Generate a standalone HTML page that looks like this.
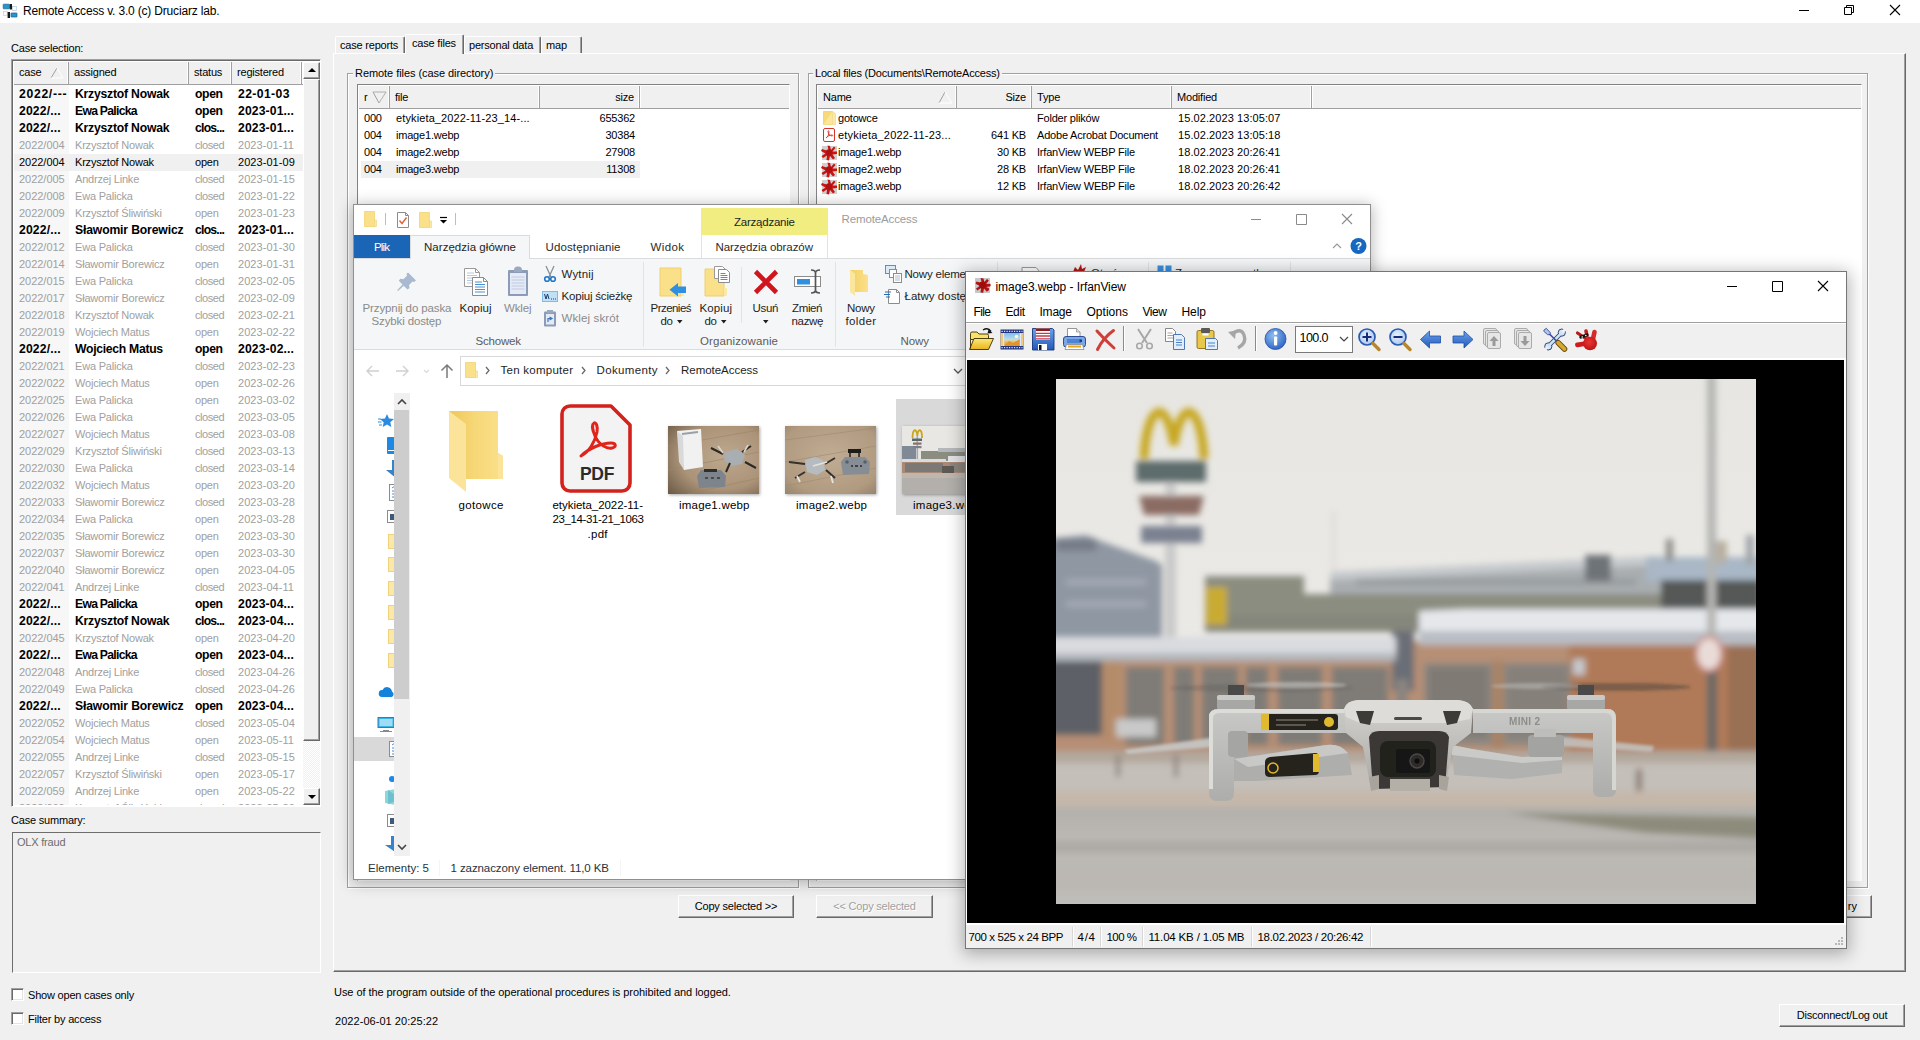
<!DOCTYPE html>
<html><head><meta charset="utf-8"><title>Remote Access</title>
<style>
*{box-sizing:border-box;margin:0;padding:0}
html,body{width:1920px;height:1040px;overflow:hidden;background:#f0f0f0}
body{font-family:"Liberation Sans",sans-serif;font-size:11px;color:#000;position:relative;letter-spacing:-0.2px}
.a{position:absolute}
.t{position:absolute;white-space:nowrap;line-height:1}
.sunk{position:absolute;border:1px solid;border-color:#828282 #fff #fff #828282;box-shadow:inset 1px 1px 0 #fff}
.btn{position:absolute;background:#f0f0f0;border:1px solid;border-color:#fff #696969 #696969 #fff;box-shadow:inset -1px -1px 0 #a0a0a0;text-align:center;font-size:11px;line-height:19px;white-space:nowrap}
.hd{position:absolute;top:0;height:22px !important;background:#f0f0f0;border-right:1px solid #a0a0a0;box-shadow:inset -1px 0 0 #fff, 1px 0 0 #fff;font-size:11px;line-height:21px;white-space:nowrap;overflow:hidden}
.cl{position:absolute;left:0;width:290px;height:17px;white-space:nowrap}
.cl span{position:absolute;top:0;line-height:17px;overflow:hidden;white-space:nowrap}
.cl.g{color:#a0a0a0}
.cl.b{font-weight:bold;font-size:12.2px;color:#000;letter-spacing:-0.15px}
.cl.s{background:#f0f0f0}
.gb{position:absolute;border:1px solid #a0a0a0;box-shadow:1px 1px 0 #fff, inset 1px 1px 0 #fff}
.gbl{position:absolute;background:#f0f0f0;padding:0 2px;line-height:13px;font-size:11px;white-space:nowrap}
.rw{position:absolute;white-space:nowrap;line-height:17px;height:17px;font-size:11px}
.sg{font-family:"Liberation Sans",sans-serif}
</style></head><body>

<div class="a" style="left:0;top:0;width:1920px;height:23px;background:#fff"></div>
<svg class="a" style="left:0px;top:0px" width="20" height="22" viewBox="0 0 20 22">
<rect x="3.200" y="4.200" width="6.300" height="4.600" rx=".6" fill="#2396d2" stroke="#1b5f88" stroke-width=".7"/>
<rect x="9.800" y="4" width="2.200" height="5.500" fill="#1a1a1a"/>
<rect x="12.400" y="6.300" width="4.200" height="4" fill="#fdfdfd" stroke="#a9c2d8" stroke-width=".6"/>
<rect x="3.300" y="11.600" width="3.900" height="4" fill="#fdfdfd" stroke="#d3c3b3" stroke-width=".6"/>
<rect x="7.600" y="12" width="2.400" height="6" fill="#1a1a1a"/>
<rect x="11" y="13" width="6" height="4" rx=".5" fill="#2396d2" stroke="#1b5f88" stroke-width=".7"/>
</svg>
<div class="t" style="left:23px;top:5px;font-size:12px;letter-spacing:-0.18px">Remote Access v. 3.0 (c) Druciarz lab.</div>
<svg class="a" style="left:1780px;top:0" width="140" height="23" viewBox="0 0 140 23">
<path d="M19 10.5h10" stroke="#000" stroke-width="1" fill="none"/>
<path d="M64.5 7.5h7v7h-7z M66.500 7.5v-2h7v7h-2" stroke="#000" stroke-width="1" fill="none"/>
<path d="M110 5l10 10M120 5l-10 10" stroke="#000" stroke-width="1.1" fill="none"/>
</svg>
<div class="t" style="left:11px;top:43px">Case selection:</div>
<div class="a" style="left:11px;top:59px;width:310px;height:748px;background:#fff;border:1px solid;border-color:#a0a0a0 #fff #fff #a0a0a0;box-shadow:inset 1px 1px 0 #696969"></div>
<div class="a" style="left:14px;top:62px;width:306px;height:743px;overflow:hidden;background:#fff">
<div class="a" style="left:0;top:23px;width:55px;height:730px;background:#f7f7f7"></div>
<div class="a" style="left:0;top:0;width:289px;height:23px;background:#f0f0f0;border-bottom:1px solid #a0a0a0"></div>
<div class="hd" style="left:0px;width:55px;padding-left:5px">case</div>
<div class="hd" style="left:55px;width:120px;padding-left:5px">assigned</div>
<div class="hd" style="left:175px;width:43px;padding-left:5px">status</div>
<div class="hd" style="left:218px;width:70px;padding-left:5px">registered</div>
<svg class="a" style="left:36px;top:5px" width="14" height="12"><path d="M1 11L7 1" stroke="#a0a0a0" fill="none"/><path d="M7 1L13 11H1" stroke="#fff" fill="none"/></svg>
<div class="cl b" style="top:24px"><span style="left:5px;width:50px;letter-spacing:0.683px;">2022/---</span><span style="left:61px;width:114px;letter-spacing:-0.216px;">Krzysztof Nowak</span><span style="left:181px;width:40px;letter-spacing:-0.380px;">open</span><span style="left:224px;width:64px;letter-spacing:0.380px;">22-01-03</span></div>
<div class="cl b" style="top:41px"><span style="left:5px;width:50px;letter-spacing:0.157px;">2022/...</span><span style="left:61px;width:114px;letter-spacing:-0.726px;">Ewa Palicka</span><span style="left:181px;width:40px;letter-spacing:-0.380px;">open</span><span style="left:224px;width:64px;letter-spacing:0.118px;">2023-01...</span></div>
<div class="cl b" style="top:58px"><span style="left:5px;width:50px;letter-spacing:0.157px;">2022/...</span><span style="left:61px;width:114px;letter-spacing:-0.216px;">Krzysztof Nowak</span><span style="left:181px;width:40px;letter-spacing:-0.763px;">clos...</span><span style="left:224px;width:64px;letter-spacing:0.118px;">2023-01...</span></div>
<div class="cl g" style="top:75px"><span style="left:5px;width:50px;letter-spacing:-0.03px;">2022/004</span><span style="left:61px;width:114px;">Krzysztof Nowak</span><span style="left:181px;width:40px;letter-spacing:-0.43px;">closed</span><span style="left:224px;width:64px;letter-spacing:0.06px;">2023-01-11</span></div>
<div class="cl s" style="top:92px"><span style="left:5px;width:50px;letter-spacing:-0.03px;">2022/004</span><span style="left:61px;width:114px;">Krzysztof Nowak</span><span style="left:181px;width:40px;">open</span><span style="left:224px;width:64px;letter-spacing:0.06px;">2023-01-09</span></div>
<div class="cl g" style="top:109px"><span style="left:5px;width:50px;letter-spacing:-0.03px;">2022/005</span><span style="left:61px;width:114px;">Andrzej Linke</span><span style="left:181px;width:40px;letter-spacing:-0.43px;">closed</span><span style="left:224px;width:64px;letter-spacing:0.06px;">2023-01-15</span></div>
<div class="cl g" style="top:126px"><span style="left:5px;width:50px;letter-spacing:-0.03px;">2022/008</span><span style="left:61px;width:114px;">Ewa Palicka</span><span style="left:181px;width:40px;letter-spacing:-0.43px;">closed</span><span style="left:224px;width:64px;letter-spacing:0.06px;">2023-01-22</span></div>
<div class="cl g" style="top:143px"><span style="left:5px;width:50px;letter-spacing:-0.03px;">2022/009</span><span style="left:61px;width:114px;">Krzysztof Śliwiński</span><span style="left:181px;width:40px;">open</span><span style="left:224px;width:64px;letter-spacing:0.06px;">2023-01-23</span></div>
<div class="cl b" style="top:160px"><span style="left:5px;width:50px;letter-spacing:0.157px;">2022/...</span><span style="left:61px;width:114px;letter-spacing:-0.155px;">Sławomir Borewicz</span><span style="left:181px;width:40px;letter-spacing:-0.763px;">clos...</span><span style="left:224px;width:64px;letter-spacing:0.118px;">2023-01...</span></div>
<div class="cl g" style="top:177px"><span style="left:5px;width:50px;letter-spacing:-0.03px;">2022/012</span><span style="left:61px;width:114px;">Ewa Palicka</span><span style="left:181px;width:40px;letter-spacing:-0.43px;">closed</span><span style="left:224px;width:64px;letter-spacing:0.06px;">2023-01-30</span></div>
<div class="cl g" style="top:194px"><span style="left:5px;width:50px;letter-spacing:-0.03px;">2022/014</span><span style="left:61px;width:114px;">Sławomir Borewicz</span><span style="left:181px;width:40px;">open</span><span style="left:224px;width:64px;letter-spacing:0.06px;">2023-01-31</span></div>
<div class="cl g" style="top:211px"><span style="left:5px;width:50px;letter-spacing:-0.03px;">2022/015</span><span style="left:61px;width:114px;">Ewa Palicka</span><span style="left:181px;width:40px;letter-spacing:-0.43px;">closed</span><span style="left:224px;width:64px;letter-spacing:0.06px;">2023-02-05</span></div>
<div class="cl g" style="top:228px"><span style="left:5px;width:50px;letter-spacing:-0.03px;">2022/017</span><span style="left:61px;width:114px;">Sławomir Borewicz</span><span style="left:181px;width:40px;letter-spacing:-0.43px;">closed</span><span style="left:224px;width:64px;letter-spacing:0.06px;">2023-02-09</span></div>
<div class="cl g" style="top:245px"><span style="left:5px;width:50px;letter-spacing:-0.03px;">2022/018</span><span style="left:61px;width:114px;">Krzysztof Nowak</span><span style="left:181px;width:40px;letter-spacing:-0.43px;">closed</span><span style="left:224px;width:64px;letter-spacing:0.06px;">2023-02-21</span></div>
<div class="cl g" style="top:262px"><span style="left:5px;width:50px;letter-spacing:-0.03px;">2022/019</span><span style="left:61px;width:114px;">Wojciech Matus</span><span style="left:181px;width:40px;">open</span><span style="left:224px;width:64px;letter-spacing:0.06px;">2023-02-22</span></div>
<div class="cl b" style="top:279px"><span style="left:5px;width:50px;letter-spacing:0.157px;">2022/...</span><span style="left:61px;width:114px;letter-spacing:-0.290px;">Wojciech Matus</span><span style="left:181px;width:40px;letter-spacing:-0.380px;">open</span><span style="left:224px;width:64px;letter-spacing:0.118px;">2023-02...</span></div>
<div class="cl g" style="top:296px"><span style="left:5px;width:50px;letter-spacing:-0.03px;">2022/021</span><span style="left:61px;width:114px;">Ewa Palicka</span><span style="left:181px;width:40px;letter-spacing:-0.43px;">closed</span><span style="left:224px;width:64px;letter-spacing:0.06px;">2023-02-23</span></div>
<div class="cl g" style="top:313px"><span style="left:5px;width:50px;letter-spacing:-0.03px;">2022/022</span><span style="left:61px;width:114px;">Wojciech Matus</span><span style="left:181px;width:40px;">open</span><span style="left:224px;width:64px;letter-spacing:0.06px;">2023-02-26</span></div>
<div class="cl g" style="top:330px"><span style="left:5px;width:50px;letter-spacing:-0.03px;">2022/025</span><span style="left:61px;width:114px;">Ewa Palicka</span><span style="left:181px;width:40px;">open</span><span style="left:224px;width:64px;letter-spacing:0.06px;">2023-03-02</span></div>
<div class="cl g" style="top:347px"><span style="left:5px;width:50px;letter-spacing:-0.03px;">2022/026</span><span style="left:61px;width:114px;">Ewa Palicka</span><span style="left:181px;width:40px;letter-spacing:-0.43px;">closed</span><span style="left:224px;width:64px;letter-spacing:0.06px;">2023-03-05</span></div>
<div class="cl g" style="top:364px"><span style="left:5px;width:50px;letter-spacing:-0.03px;">2022/027</span><span style="left:61px;width:114px;">Wojciech Matus</span><span style="left:181px;width:40px;letter-spacing:-0.43px;">closed</span><span style="left:224px;width:64px;letter-spacing:0.06px;">2023-03-08</span></div>
<div class="cl g" style="top:381px"><span style="left:5px;width:50px;letter-spacing:-0.03px;">2022/029</span><span style="left:61px;width:114px;">Krzysztof Śliwiński</span><span style="left:181px;width:40px;letter-spacing:-0.43px;">closed</span><span style="left:224px;width:64px;letter-spacing:0.06px;">2023-03-13</span></div>
<div class="cl g" style="top:398px"><span style="left:5px;width:50px;letter-spacing:-0.03px;">2022/030</span><span style="left:61px;width:114px;">Ewa Palicka</span><span style="left:181px;width:40px;letter-spacing:-0.43px;">closed</span><span style="left:224px;width:64px;letter-spacing:0.06px;">2023-03-14</span></div>
<div class="cl g" style="top:415px"><span style="left:5px;width:50px;letter-spacing:-0.03px;">2022/032</span><span style="left:61px;width:114px;">Wojciech Matus</span><span style="left:181px;width:40px;">open</span><span style="left:224px;width:64px;letter-spacing:0.06px;">2023-03-20</span></div>
<div class="cl g" style="top:432px"><span style="left:5px;width:50px;letter-spacing:-0.03px;">2022/033</span><span style="left:61px;width:114px;">Sławomir Borewicz</span><span style="left:181px;width:40px;letter-spacing:-0.43px;">closed</span><span style="left:224px;width:64px;letter-spacing:0.06px;">2023-03-28</span></div>
<div class="cl g" style="top:449px"><span style="left:5px;width:50px;letter-spacing:-0.03px;">2022/034</span><span style="left:61px;width:114px;">Ewa Palicka</span><span style="left:181px;width:40px;">open</span><span style="left:224px;width:64px;letter-spacing:0.06px;">2023-03-28</span></div>
<div class="cl g" style="top:466px"><span style="left:5px;width:50px;letter-spacing:-0.03px;">2022/035</span><span style="left:61px;width:114px;">Sławomir Borewicz</span><span style="left:181px;width:40px;">open</span><span style="left:224px;width:64px;letter-spacing:0.06px;">2023-03-30</span></div>
<div class="cl g" style="top:483px"><span style="left:5px;width:50px;letter-spacing:-0.03px;">2022/037</span><span style="left:61px;width:114px;">Sławomir Borewicz</span><span style="left:181px;width:40px;">open</span><span style="left:224px;width:64px;letter-spacing:0.06px;">2023-03-30</span></div>
<div class="cl g" style="top:500px"><span style="left:5px;width:50px;letter-spacing:-0.03px;">2022/040</span><span style="left:61px;width:114px;">Sławomir Borewicz</span><span style="left:181px;width:40px;">open</span><span style="left:224px;width:64px;letter-spacing:0.06px;">2023-04-05</span></div>
<div class="cl g" style="top:517px"><span style="left:5px;width:50px;letter-spacing:-0.03px;">2022/041</span><span style="left:61px;width:114px;">Andrzej Linke</span><span style="left:181px;width:40px;letter-spacing:-0.43px;">closed</span><span style="left:224px;width:64px;letter-spacing:0.06px;">2023-04-11</span></div>
<div class="cl b" style="top:534px"><span style="left:5px;width:50px;letter-spacing:0.157px;">2022/...</span><span style="left:61px;width:114px;letter-spacing:-0.726px;">Ewa Palicka</span><span style="left:181px;width:40px;letter-spacing:-0.380px;">open</span><span style="left:224px;width:64px;letter-spacing:0.118px;">2023-04...</span></div>
<div class="cl b" style="top:551px"><span style="left:5px;width:50px;letter-spacing:0.157px;">2022/...</span><span style="left:61px;width:114px;letter-spacing:-0.216px;">Krzysztof Nowak</span><span style="left:181px;width:40px;letter-spacing:-0.763px;">clos...</span><span style="left:224px;width:64px;letter-spacing:0.118px;">2023-04...</span></div>
<div class="cl g" style="top:568px"><span style="left:5px;width:50px;letter-spacing:-0.03px;">2022/045</span><span style="left:61px;width:114px;">Krzysztof Nowak</span><span style="left:181px;width:40px;">open</span><span style="left:224px;width:64px;letter-spacing:0.06px;">2023-04-20</span></div>
<div class="cl b" style="top:585px"><span style="left:5px;width:50px;letter-spacing:0.157px;">2022/...</span><span style="left:61px;width:114px;letter-spacing:-0.726px;">Ewa Palicka</span><span style="left:181px;width:40px;letter-spacing:-0.380px;">open</span><span style="left:224px;width:64px;letter-spacing:0.118px;">2023-04...</span></div>
<div class="cl g" style="top:602px"><span style="left:5px;width:50px;letter-spacing:-0.03px;">2022/048</span><span style="left:61px;width:114px;">Andrzej Linke</span><span style="left:181px;width:40px;letter-spacing:-0.43px;">closed</span><span style="left:224px;width:64px;letter-spacing:0.06px;">2023-04-26</span></div>
<div class="cl g" style="top:619px"><span style="left:5px;width:50px;letter-spacing:-0.03px;">2022/049</span><span style="left:61px;width:114px;">Ewa Palicka</span><span style="left:181px;width:40px;letter-spacing:-0.43px;">closed</span><span style="left:224px;width:64px;letter-spacing:0.06px;">2023-04-26</span></div>
<div class="cl b" style="top:636px"><span style="left:5px;width:50px;letter-spacing:0.157px;">2022/...</span><span style="left:61px;width:114px;letter-spacing:-0.155px;">Sławomir Borewicz</span><span style="left:181px;width:40px;letter-spacing:-0.380px;">open</span><span style="left:224px;width:64px;letter-spacing:0.118px;">2023-04...</span></div>
<div class="cl g" style="top:653px"><span style="left:5px;width:50px;letter-spacing:-0.03px;">2022/052</span><span style="left:61px;width:114px;">Wojciech Matus</span><span style="left:181px;width:40px;letter-spacing:-0.43px;">closed</span><span style="left:224px;width:64px;letter-spacing:0.06px;">2023-05-04</span></div>
<div class="cl g" style="top:670px"><span style="left:5px;width:50px;letter-spacing:-0.03px;">2022/054</span><span style="left:61px;width:114px;">Wojciech Matus</span><span style="left:181px;width:40px;">open</span><span style="left:224px;width:64px;letter-spacing:0.06px;">2023-05-11</span></div>
<div class="cl g" style="top:687px"><span style="left:5px;width:50px;letter-spacing:-0.03px;">2022/055</span><span style="left:61px;width:114px;">Andrzej Linke</span><span style="left:181px;width:40px;letter-spacing:-0.43px;">closed</span><span style="left:224px;width:64px;letter-spacing:0.06px;">2023-05-15</span></div>
<div class="cl g" style="top:704px"><span style="left:5px;width:50px;letter-spacing:-0.03px;">2022/057</span><span style="left:61px;width:114px;">Krzysztof Śliwiński</span><span style="left:181px;width:40px;">open</span><span style="left:224px;width:64px;letter-spacing:0.06px;">2023-05-17</span></div>
<div class="cl g" style="top:721px"><span style="left:5px;width:50px;letter-spacing:-0.03px;">2022/059</span><span style="left:61px;width:114px;">Andrzej Linke</span><span style="left:181px;width:40px;">open</span><span style="left:224px;width:64px;letter-spacing:0.06px;">2023-05-22</span></div>
<div class="cl g" style="top:738px"><span style="left:5px;width:50px;letter-spacing:-0.03px;">2022/060</span><span style="left:61px;width:114px;">Krzysztof Śliwiński</span><span style="left:181px;width:40px;letter-spacing:-0.43px;">closed</span><span style="left:224px;width:64px;letter-spacing:0.06px;">2023-05-29</span></div>
<div class="a" style="left:289px;top:0;width:17px;height:743px;background:#f0f0f0;background-image:repeating-conic-gradient(#fff 0 25%,#f0f0f0 0 50%);background-size:2px 2px"></div>
<div class="btn" style="left:289px;top:0;width:17px;height:17px"></div>
<svg class="a" style="left:294px;top:6px" width="8" height="4"><path d="M0 4L4 0L8 4z" fill="#000"/></svg>
<div class="btn" style="left:289px;top:17px;width:17px;height:662px"></div>
<div class="btn" style="left:289px;top:726px;width:17px;height:17px"></div>
<svg class="a" style="left:294px;top:733px" width="8" height="4"><path d="M0 0L4 4L8 0z" fill="#000"/></svg>
</div>
<div class="t" style="left:11px;top:815px">Case summary:</div>
<div class="a" style="left:12px;top:832px;width:309px;height:141px;background:#f0f0f0;border:1px solid;border-color:#6e6e6e #fff #fff #6e6e6e"></div>
<div class="t" style="left:17px;top:837px;color:#6d6d6d">OLX fraud</div>
<div class="a" style="left:11px;top:988px;width:13px;height:13px;background:#fff;border:1px solid;border-color:#a0a0a0 #fff #fff #a0a0a0;box-shadow:inset 1px 1px 0 #696969, inset -1px -1px 0 #e3e3e3"></div>
<div class="t" style="left:28px;top:990px">Show open cases only</div>
<div class="a" style="left:11px;top:1012px;width:13px;height:13px;background:#fff;border:1px solid;border-color:#a0a0a0 #fff #fff #a0a0a0;box-shadow:inset 1px 1px 0 #696969, inset -1px -1px 0 #e3e3e3"></div>
<div class="t" style="left:28px;top:1014px">Filter by access</div>
<div class="a" style="left:333px;top:53px;width:1573px;height:919px;border:1px solid;border-color:#fff #696969 #696969 #fff;box-shadow:inset -1px -1px 0 #a0a0a0"></div>
<div class="a" style="left:335px;top:36px;width:70px;height:17px;border:1px solid;border-color:#fff #696969 transparent #fff;box-shadow:inset -1px 0 0 #a0a0a0;border-bottom:none;border-radius:2px 2px 0 0"></div>
<div class="t" style="left:340px;top:40px">case reports</div>
<div class="a" style="left:464px;top:36px;width:77px;height:17px;border:1px solid;border-color:#fff #696969 transparent #fff;box-shadow:inset -1px 0 0 #a0a0a0;border-bottom:none;border-radius:2px 2px 0 0"></div>
<div class="t" style="left:469px;top:40px">personal data</div>
<div class="a" style="left:541px;top:36px;width:41px;height:17px;border:1px solid;border-color:#fff #696969 transparent #fff;box-shadow:inset -1px 0 0 #a0a0a0;border-bottom:none;border-radius:2px 2px 0 0"></div>
<div class="t" style="left:546px;top:40px">map</div>
<div class="a" style="left:405px;top:34px;width:59px;height:20px;background:#f0f0f0;border:1px solid;border-color:#fff #696969 transparent #fff;box-shadow:inset -1px 0 0 #a0a0a0;border-bottom:none;border-radius:2px 2px 0 0"></div>
<div class="t" style="left:412px;top:38px">case files</div>
<div class="gb" style="left:347px;top:73px;width:452px;height:815px"></div>
<div class="gbl" style="left:353px;top:67px;letter-spacing:-0.06px">Remote files (case directory)</div>
<div class="gb" style="left:808px;top:73px;width:1060px;height:815px"></div>
<div class="gbl" style="left:813px;top:67px">Local files (Documents\RemoteAccess)</div>
<div class="sunk" style="left:357px;top:84px;width:433px;height:797px;background:#fff"></div>
<div class="a" style="left:359px;top:86px;width:430px;height:790px;overflow:hidden">
<div class="a" style="left:0;top:0;width:430px;height:23px;background:#f0f0f0;border-bottom:1px solid #a0a0a0"></div><div class="hd" style="left:0px;width:31px;height:23px;line-height:23px;padding-left:5px">r</div><div class="hd" style="left:31px;width:150px;height:23px;line-height:23px;padding-left:5px">file</div><div class="hd" style="left:181px;width:100px;height:23px;line-height:23px;text-align:right;padding-right:5px">size</div>
<svg class="a" style="left:13px;top:5px" width="16" height="13"><path d="M1 1L7 12" stroke="#a0a0a0" fill="none"/><path d="M7 12L14 1H1" stroke="#a0a0a0" fill="none" stroke-width=".8"/></svg>
<div class="a" style="left:2px;top:75px;width:279px;height:17px;background:#f0f0f0"></div>
<div class="rw" style="left:5px;top:24px">000</div><div class="rw" style="left:37px;top:24px;letter-spacing:0.12px">etykieta_2022-11-23_14-...</div><div class="rw" style="left:181px;width:95px;text-align:right;top:24px">655362</div>
<div class="rw" style="left:5px;top:41px">004</div><div class="rw" style="left:37px;top:41px;letter-spacing:-0.2px">image1.webp</div><div class="rw" style="left:181px;width:95px;text-align:right;top:41px">30384</div>
<div class="rw" style="left:5px;top:58px">004</div><div class="rw" style="left:37px;top:58px;letter-spacing:-0.2px">image2.webp</div><div class="rw" style="left:181px;width:95px;text-align:right;top:58px">27908</div>
<div class="rw" style="left:5px;top:75px">004</div><div class="rw" style="left:37px;top:75px;letter-spacing:-0.2px">image3.webp</div><div class="rw" style="left:181px;width:95px;text-align:right;top:75px">11308</div>
</div>
<div class="sunk" style="left:816px;top:84px;width:1046px;height:797px;background:#fff"></div>
<div class="a" style="left:818px;top:86px;width:1043px;height:790px;overflow:hidden">
<div class="a" style="left:0;top:0;width:1043px;height:23px;background:#f0f0f0;border-bottom:1px solid #a0a0a0"></div><div class="hd" style="left:0px;width:139px;height:23px;line-height:23px;padding-left:5px">Name</div><div class="hd" style="left:139px;width:75px;height:23px;line-height:23px;text-align:right;padding-right:5px">Size</div><div class="hd" style="left:214px;width:140px;height:23px;line-height:23px;padding-left:5px">Type</div><div class="hd" style="left:354px;width:140px;height:23px;line-height:23px;padding-left:5px">Modified</div>
<svg class="a" style="left:120px;top:5px" width="16" height="13"><path d="M1 12L7 1" stroke="#a0a0a0" fill="none"/><path d="M7 1L14 12H1" stroke="#fff" fill="none"/></svg>
<svg class="a" style="left:4px;top:24px" width="16" height="16"><path d="M1.500 1.5h9v13h-9z" fill="#f7d978" stroke="#e9c558" stroke-width=".6"/><path d="M1.500 14.500h12v-11l-3-2z" fill="#fbe79c"/><path d="M10.500 1.5l3 2v11h-3z" fill="#fbe9a8" stroke="#edd48a" stroke-width=".5"/></svg>
<div class="rw" style="left:20px;top:24px;letter-spacing:-0.2px">gotowce</div><div class="rw" style="left:139px;width:69px;text-align:right;top:24px"></div><div class="rw" style="left:219px;top:24px">Folder plików</div><div class="rw" style="left:360px;top:24px;letter-spacing:0.08px">15.02.2023 13:05:07</div>
<svg class="a" style="left:4px;top:41px" width="16" height="16"><rect x="1.5" y="1.5" width="11" height="13" rx="1.5" fill="#fff" stroke="#d4352b" stroke-width="1"/><path d="M4 11c2-1 3-4 3-6.500c0-1-1-1-1 0c0 2 2 4.500 4 4.500c1 0 1-1 0-1c-2 0-4.500 1-6 3z" fill="none" stroke="#d4352b" stroke-width=".9"/></svg>
<div class="rw" style="left:20px;top:41px;letter-spacing:0.2px">etykieta_2022-11-23...</div><div class="rw" style="left:139px;width:69px;text-align:right;top:41px">641 KB</div><div class="rw" style="left:219px;top:41px">Adobe Acrobat Document</div><div class="rw" style="left:360px;top:41px;letter-spacing:0.08px">15.02.2023 13:05:18</div>
<svg class="a" style="left:2px;top:58px" width="18" height="17" viewBox="0 0 18 17"><rect x="2" y="2" width="15" height="14" fill="#a9a9a9" opacity=".55"/><path d="M9 8.500L7.500 1.5 10 2l1 4 3-3.500 1.500 1.500-3 3.500 4.500 0 0 2.500-4.500 0.500 2.500 3.500-2 1.500-3-3.500-1 4.500-2.500-0.500 0.500-4.500-4 2.500-1.500-2 4-2.500-4.500-2.500 1-2 4.500 1.500z" fill="#c81414"/><circle cx="9" cy="8.500" r="3.200" fill="#b01010"/></svg>
<div class="rw" style="left:20px;top:58px;letter-spacing:-0.2px">image1.webp</div><div class="rw" style="left:139px;width:69px;text-align:right;top:58px">30 KB</div><div class="rw" style="left:219px;top:58px">IrfanView WEBP File</div><div class="rw" style="left:360px;top:58px;letter-spacing:0.08px">18.02.2023 20:26:41</div>
<svg class="a" style="left:2px;top:75px" width="18" height="17" viewBox="0 0 18 17"><rect x="2" y="2" width="15" height="14" fill="#a9a9a9" opacity=".55"/><path d="M9 8.500L7.500 1.5 10 2l1 4 3-3.500 1.500 1.500-3 3.500 4.500 0 0 2.500-4.500 0.500 2.500 3.500-2 1.500-3-3.500-1 4.500-2.500-0.500 0.500-4.500-4 2.500-1.500-2 4-2.500-4.500-2.500 1-2 4.500 1.500z" fill="#c81414"/><circle cx="9" cy="8.500" r="3.200" fill="#b01010"/></svg>
<div class="rw" style="left:20px;top:75px;letter-spacing:-0.2px">image2.webp</div><div class="rw" style="left:139px;width:69px;text-align:right;top:75px">28 KB</div><div class="rw" style="left:219px;top:75px">IrfanView WEBP File</div><div class="rw" style="left:360px;top:75px;letter-spacing:0.08px">18.02.2023 20:26:41</div>
<svg class="a" style="left:2px;top:92px" width="18" height="17" viewBox="0 0 18 17"><rect x="2" y="2" width="15" height="14" fill="#a9a9a9" opacity=".55"/><path d="M9 8.500L7.500 1.5 10 2l1 4 3-3.500 1.500 1.500-3 3.500 4.500 0 0 2.500-4.500 0.500 2.500 3.500-2 1.500-3-3.500-1 4.500-2.500-0.500 0.500-4.500-4 2.500-1.500-2 4-2.500-4.500-2.500 1-2 4.500 1.500z" fill="#c81414"/><circle cx="9" cy="8.500" r="3.200" fill="#b01010"/></svg>
<div class="rw" style="left:20px;top:92px;letter-spacing:-0.2px">image3.webp</div><div class="rw" style="left:139px;width:69px;text-align:right;top:92px">12 KB</div><div class="rw" style="left:219px;top:92px">IrfanView WEBP File</div><div class="rw" style="left:360px;top:92px;letter-spacing:0.08px">18.02.2023 20:26:42</div>
</div>
<div class="btn" style="left:678px;top:895px;width:116px;height:23px;line-height:20px">Copy selected &gt;&gt;</div>
<div class="btn" style="left:816px;top:895px;width:117px;height:23px;line-height:20px;color:#a0a0a0;text-shadow:1px 1px 0 #fff">&lt;&lt; Copy selected</div>
<div class="btn" style="left:1760px;top:895px;width:112px;height:23px;line-height:20px;text-align:right;padding-right:14px;letter-spacing:0">ry</div>
<div class="btn" style="left:1779px;top:1004px;width:126px;height:23px;line-height:20px">Disconnect/Log out</div>
<div class="t" style="left:334px;top:987px;letter-spacing:-0.06px">Use of the program outside of the operational procedures is prohibited and logged.</div>
<div class="t" style="left:335px;top:1016px;letter-spacing:0.05px">2022-06-01 20:25:22</div>
<div class="a" style="left:354px;top:205px;width:1016px;height:674px;background:#fff;box-shadow:0 0 0 1px #8f8f8f, 0 2px 14px 2px rgba(0,0,0,.28)"></div>
<div class="a" id="exp" style="left:354px;top:205px;width:1016px;height:674px;overflow:hidden;letter-spacing:0">
<svg class="a" style="left:10px;top:6px" width="13" height="16" viewBox="0 0 13 16" preserveAspectRatio="none"><path d="M0.500 0.500h10v15h-10z" fill="#fbe08a" stroke="#efcf6a" stroke-width=".7"/><path d="M10.500 9h2v6.500h-2z" fill="#fbe9a8" stroke="#efd37a" stroke-width=".6"/></svg>
<div class="a" style="left:31px;top:8px;width:1px;height:12px;background:#bdbdbd"></div>
<svg class="a" style="left:42px;top:6px" width="14" height="18"><path d="M1.500 1.500h8l3 3v12h-11z" fill="#fff" stroke="#8c8c8c"/><path d="M9.500 1.500v3h3" fill="none" stroke="#8c8c8c"/><path d="M3.500 9.500l2.500 3 4.500-6" fill="none" stroke="#e0633a" stroke-width="1.400"/></svg>
<svg class="a" style="left:65px;top:7px" width="13" height="16" viewBox="0 0 13 16" preserveAspectRatio="none"><path d="M0.500 0.500h10v15h-10z" fill="#fbe08a" stroke="#efcf6a" stroke-width=".7"/><path d="M10.500 9h2v6.500h-2z" fill="#fbe9a8" stroke="#efd37a" stroke-width=".6"/></svg>
<svg class="a" style="left:86px;top:11px" width="8" height="8"><path d="M0 1.500h7" stroke="#000" stroke-width="1.200"/><path d="M0 4h7L3.500 7.500z" fill="#000"/></svg>
<div class="a" style="left:101px;top:8px;width:1px;height:12px;background:#bdbdbd"></div>
<div class="a" style="left:347px;top:3px;width:127px;height:27px;background:#f1ed80"></div>
<div class="t" style="left:380.0px;top:9.5px;height:15px;line-height:15px;font-size:11.5px;letter-spacing:-0.228px;color:#1e1e1e;">Zarządzanie</div>
<div class="t" style="left:487.5px;top:7.0px;height:15px;line-height:15px;font-size:11.5px;letter-spacing:-0.121px;color:#9b9b9b;">RemoteAccess</div>
<svg class="a" style="left:886px;top:2px" width="125" height="24"><path d="M11 12.500h10" stroke="#8a8a8a"/><path d="M56.500 7.500h10v10h-10z" fill="none" stroke="#8a8a8a"/><path d="M102 7l10 10M112 7l-10 10" stroke="#8a8a8a" stroke-width="1.100"/></svg>
<div class="a" style="left:0;top:30px;width:56px;height:23px;background:#1a65b5"></div>
<div class="t" style="left:20.0px;top:34.5px;height:15px;line-height:15px;font-size:11.5px;letter-spacing:-0.843px;color:#fff;">Plik</div>
<div class="a" style="left:0;top:53px;width:1016px;height:92px;background:#f5f6f7;border-top:1px solid #dadbdc;border-bottom:1px solid #dadbdc"></div>
<div class="a" style="left:56px;top:30px;width:120px;height:24px;background:#f5f6f7;border:1px solid #dadbdc;border-bottom:none"></div>
<div class="t" style="left:70.0px;top:34.5px;height:15px;line-height:15px;font-size:11.5px;letter-spacing:0.039px;color:#1e1e1e;">Narzędzia główne</div>
<div class="t" style="left:191.5px;top:34.5px;height:15px;line-height:15px;font-size:11.5px;letter-spacing:0.123px;color:#2b2b2b;">Udostępnianie</div>
<div class="t" style="left:296.5px;top:34.5px;height:15px;line-height:15px;font-size:11.5px;letter-spacing:0.387px;color:#2b2b2b;">Widok</div>
<div class="a" style="left:347px;top:30px;width:127px;height:23px;border-left:1px solid #e2e3e4;border-right:1px solid #e2e3e4"></div>
<div class="t" style="left:361.5px;top:34.5px;height:15px;line-height:15px;font-size:11.5px;letter-spacing:-0.058px;color:#2b2b2b;">Narzędzia obrazów</div>
<svg class="a" style="left:977px;top:32px" width="36" height="18"><path d="M2 11l4-4 4 4" fill="none" stroke="#9a9a9a" stroke-width="1.200"/><circle cx="27.500" cy="9" r="8" fill="#1567c0"/><text x="27.500" y="13" text-anchor="middle" font-family="Liberation Sans" font-weight="bold" font-size="11" fill="#fff">?</text></svg>
<svg class="a" style="left:42px;top:66px" width="22" height="22" viewBox="0 0 22 22"><path d="M12 1.500l8 8-2 1.500-1.500-.5-3.500 3.500 .5 3-2 1.500-3.800-3.800L2 20l-.8-.8L6.500 13.500 2.800 9.800l1.500-2 3 .5L11 4.800 10.500 3z" fill="#a9b9d1"/></svg>
<div class="t" style="left:8.5px;top:96.0px;height:15px;line-height:15px;font-size:11.5px;letter-spacing:-0.111px;color:#8b8b8b;">Przypnij do paska</div>
<div class="t" style="left:17.5px;top:109.0px;height:15px;line-height:15px;font-size:11.5px;letter-spacing:-0.133px;color:#8b8b8b;">Szybki dostęp</div>
<svg class="a" style="left:109px;top:62px" width="26" height="30" viewBox="0 0 26 30"><path d="M1.500 1.500h11l4 4v14h-15z" fill="#fff" stroke="#9a9a9a"/><path d="M12.500 1.500v4h4" fill="none" stroke="#9a9a9a"/><path d="M4 6h7M4 8.500h10M4 11h10M4 13.500h10M4 16h10" stroke="#b8c8dc" stroke-width="1"/><path d="M9.500 10.500h11l4 4v14h-15z" fill="#fff" stroke="#8c8c8c"/><path d="M20.500 10.500v4h4" fill="none" stroke="#8c8c8c"/><path d="M12 15h7M12 17.500h10M12 20h10M12 22.500h10M12 25h10" stroke="#4a90d0" stroke-width="1.200"/></svg>
<div class="t" style="left:105.5px;top:96.0px;height:15px;line-height:15px;font-size:11.5px;letter-spacing:0.007px;color:#1e1e1e;">Kopiuj</div>
<svg class="a" style="left:153px;top:61px" width="22" height="31" viewBox="0 0 22 31"><rect x="1" y="4" width="20" height="26" rx="1" fill="#8c9cb8"/><rect x="3" y="7" width="16" height="21" fill="#e4eaf6"/><path d="M7 4c0-2 1-3.500 4-3.500s4 1.500 4 3.500v2H7z" fill="#9aa8c0"/><path d="M4.500 11h13M4.500 14h13M4.500 17h13M4.500 20h13M4.500 23h13" stroke="#c0cae0" stroke-width="1"/></svg>
<div class="t" style="left:150.0px;top:96.0px;height:15px;line-height:15px;font-size:11.5px;letter-spacing:-0.152px;color:#8b8b8b;">Wklej</div>
<svg class="a" style="left:189px;top:60px" width="14" height="18" viewBox="0 0 14 18"><path d="M3 1l5 11M11 1L6 12" stroke="#8a8f96" stroke-width="1.300" fill="none"/><circle cx="4" cy="14" r="2.300" fill="none" stroke="#1f78c8" stroke-width="1.600"/><circle cx="10" cy="14" r="2.300" fill="none" stroke="#1f78c8" stroke-width="1.600"/></svg>
<div class="t" style="left:207.5px;top:61.5px;height:15px;line-height:15px;font-size:11.5px;letter-spacing:0.159px;color:#1e1e1e;">Wytnij</div>
<svg class="a" style="left:188px;top:86px" width="16" height="11" viewBox="0 0 16 11"><rect x=".5" y=".5" width="15" height="10" fill="#bfe0f6" stroke="#7fbbe6"/><path d="M2.500 3l1.500 5 1.500-5 1.500 5" fill="none" stroke="#1a3c6a" stroke-width="1"/><path d="M9 8h1M11 8h1M13 8h1" stroke="#1a3c6a" stroke-width="1.200"/></svg>
<div class="t" style="left:207.5px;top:84.0px;height:15px;line-height:15px;font-size:11.5px;letter-spacing:-0.193px;color:#1e1e1e;">Kopiuj ścieżkę</div>
<svg class="a" style="left:189px;top:104px" width="14" height="18" viewBox="0 0 14 18"><rect x="1" y="2.500" width="12" height="15" rx="1" fill="#8c9cb8"/><rect x="3" y="5" width="8" height="10.500" fill="#e4eaf6"/><rect x="4" y="1" width="6" height="3" fill="#9aa8c0"/><path d="M5 13V9.500h3.500M6.500 8l2.500 1.500L6.500 11" fill="none" stroke="#3d78b8" stroke-width="1.200"/></svg>
<div class="t" style="left:207.5px;top:106.0px;height:15px;line-height:15px;font-size:11.5px;letter-spacing:0.127px;color:#8b8b8b;">Wklej skrót</div>
<div class="t" style="left:121.5px;top:128.5px;height:15px;line-height:15px;font-size:11.5px;letter-spacing:-0.194px;color:#5c5c5c;">Schowek</div>
<div class="a" style="left:289px;top:57px;width:1px;height:85px;background:#e2e3e4"></div>
<svg class="a" style="left:305px;top:62px" width="28" height="31" viewBox="0 0 28 31"><path d="M1 1h21v28H1z" fill="#fbe08a"/><path d="M1 1h21v28H1z" fill="none" stroke="#efd070" stroke-width="1"/><path d="M22 22h3v7h-3z" fill="#fbe9a8"/><path d="M27 19.500v6.500h-8v3.500L10.500 22.800 19 16v3.500z" fill="#2f8fe0"/></svg>
<div class="t" style="left:296.5px;top:96.0px;height:15px;line-height:15px;font-size:11.5px;letter-spacing:-0.535px;color:#1e1e1e;">Przenieś</div>
<div class="t" style="left:306.5px;top:109.0px;height:15px;line-height:15px;font-size:11.5px;letter-spacing:-0.291px;color:#1e1e1e;">do</div>
<svg class="a" style="left:323px;top:115px" width="6" height="4"><path d="M0 0h5.500L2.750 3.500z" fill="#1e1e1e"/></svg>
<svg class="a" style="left:350px;top:60px" width="28" height="33" viewBox="0 0 28 33"><path d="M1 4h19v27H1z" fill="#fbe08a" stroke="#efd070"/><path d="M20 23h3v8h-3z" fill="#fbe9a8"/><path d="M10.500 1.500h8l3 3v9h-11z" fill="#fff" stroke="#9a9a9a"/><path d="M14.500 4.500h8l3 3v10h-11z" fill="#fff" stroke="#8c8c8c"/><path d="M16.500 8.500h5M16.500 10.500h7M16.500 12.500h7M16.500 14.500h7" stroke="#4a90d0" stroke-width="1"/></svg>
<div class="t" style="left:345.5px;top:96.0px;height:15px;line-height:15px;font-size:11.5px;letter-spacing:0.107px;color:#1e1e1e;">Kopiuj</div>
<div class="t" style="left:350.5px;top:109.0px;height:15px;line-height:15px;font-size:11.5px;letter-spacing:-0.291px;color:#1e1e1e;">do</div>
<svg class="a" style="left:367px;top:115px" width="6" height="4"><path d="M0 0h5.500L2.750 3.500z" fill="#1e1e1e"/></svg>
<div class="a" style="left:387px;top:62px;width:1px;height:56px;background:#e2e3e4"></div>
<svg class="a" style="left:399px;top:64px" width="26" height="26" viewBox="0 0 26 26"><path d="M2.500 2.500l21 21M23.500 2.500l-21 21" stroke="#d0151c" stroke-width="4.600" fill="none"/></svg>
<div class="t" style="left:398.5px;top:96.0px;height:15px;line-height:15px;font-size:11.5px;letter-spacing:-0.282px;color:#1e1e1e;">Usuń</div>
<svg class="a" style="left:409px;top:115px" width="6" height="4"><path d="M0 0h5.500L2.750 3.500z" fill="#1e1e1e"/></svg>
<svg class="a" style="left:439px;top:62px" width="30" height="30" viewBox="0 0 30 30"><rect x="1.500" y="9.500" width="26" height="10" fill="#fff" stroke="#8c8c8c"/><rect x="4" y="12" width="13" height="5.500" fill="#2f8fe0"/><path d="M18 3c3 0 4.500 1 4.500 3v17c0 2-1.500 3-4.500 3M27 3c-3 0-4.500 1-4.500 3M22.500 23c0 2 1.500 3 4.500 3" fill="none" stroke="#555" stroke-width="1.700"/></svg>
<div class="t" style="left:438.0px;top:96.0px;height:15px;line-height:15px;font-size:11.5px;letter-spacing:-0.363px;color:#1e1e1e;">Zmień</div>
<div class="t" style="left:437.5px;top:109.0px;height:15px;line-height:15px;font-size:11.5px;letter-spacing:-0.310px;color:#1e1e1e;">nazwę</div>
<div class="t" style="left:346.0px;top:128.5px;height:15px;line-height:15px;font-size:11.5px;letter-spacing:0.108px;color:#5c5c5c;">Organizowanie</div>
<div class="a" style="left:481px;top:57px;width:1px;height:85px;background:#e2e3e4"></div>
<svg class="a" style="left:495px;top:64px" width="20" height="29" viewBox="0 0 20 29"><defs><linearGradient id="nf" x1="0" x2="1"><stop offset="0" stop-color="#f3cf63"/><stop offset="1" stop-color="#fbe08c"/></linearGradient></defs><path d="M1 1h13v4l5 1v17H6z" fill="url(#nf)"/><path d="M1 1l5 3.500V27L1 23z" fill="#fbe6a0"/></svg>
<div class="t" style="left:493.0px;top:96.0px;height:15px;line-height:15px;font-size:11.5px;letter-spacing:-0.252px;color:#1e1e1e;">Nowy</div>
<div class="t" style="left:491.5px;top:109.0px;height:15px;line-height:15px;font-size:11.5px;letter-spacing:0.347px;color:#1e1e1e;">folder</div>
<svg class="a" style="left:531px;top:60px" width="17" height="18" viewBox="0 0 17 18"><rect x=".5" y=".5" width="10" height="8" fill="#dbeaf8" stroke="#6a8cb4"/><rect x="4.500" y="4.500" width="7" height="8" fill="#fff" stroke="#8c8c8c"/><rect x="8.500" y="8.500" width="8" height="9" fill="#fff" stroke="#8c8c8c"/><path d="M10 11h5M10 13h5M10 15h5" stroke="#9ab" stroke-width=".8"/></svg>
<div class="t" style="left:550.5px;top:61.5px;height:15px;line-height:15px;font-size:11.5px;letter-spacing:-0.197px;color:#1e1e1e;">Nowy eleme</div>
<svg class="a" style="left:530px;top:83px" width="17" height="17" viewBox="0 0 17 17"><path d="M4.500 1.500h8l3 3v11h-11z" fill="#fff" stroke="#8c8c8c"/><path d="M12.500 1.500v3h3" fill="none" stroke="#8c8c8c"/><path d="M1 4h6M0 6.500h6M2 9h4" stroke="#2a6ab0" stroke-width="1"/></svg>
<div class="t" style="left:550.5px;top:84.0px;height:15px;line-height:15px;font-size:11.5px;letter-spacing:0.013px;color:#1e1e1e;">Łatwy dostę</div>
<div class="t" style="left:546.5px;top:128.5px;height:15px;line-height:15px;font-size:11.5px;letter-spacing:-0.085px;color:#5c5c5c;">Nowy</div>
<div class="a" style="left:643px;top:57px;width:1px;height:85px;background:#e2e3e4"></div>
<div class="a" style="left:794px;top:57px;width:1px;height:85px;background:#e2e3e4"></div>
<div class="a" style="left:936px;top:57px;width:1px;height:85px;background:#e2e3e4"></div>
<svg class="a" style="left:666px;top:60px" width="24" height="8"><path d="M2 7V2.500h14l4 4.500" fill="#fff" stroke="#9a9a9a"/></svg>
<svg class="a" style="left:716px;top:59px" width="18" height="8" viewBox="0 0 18 8"><path d="M3 8l2-5 3 3 3-6 1 5 4-2-2 5z" fill="#b81414"/></svg>
<div class="t" style="left:737px;top:63px;font-size:11.5px;color:#1e1e1e">Otwórz</div>
<svg class="a" style="left:803px;top:60px" width="16" height="7"><rect x=".5" y=".5" width="6" height="6" fill="#3b8fe0"/><rect x="8.500" y=".5" width="6" height="6" fill="#3b8fe0"/></svg>
<div class="t" style="left:821px;top:63px;font-size:11.5px;color:#1e1e1e">Zaznacz wszystko</div>
<svg class="a" style="left:11px;top:157px" width="92" height="18" viewBox="0 0 92 18"><path d="M14 9H2.500M7 4L2 9l5 5" fill="none" stroke="#d0d0d0" stroke-width="1.400"/><path d="M31 9h11.500M38 4l5 5-5 5" fill="none" stroke="#d0d0d0" stroke-width="1.400"/><path d="M59 8l2.500 2.500L64 8" fill="none" stroke="#d9d9d9" stroke-width="1.100"/><path d="M82 16V3.500M76.500 8.500l5.500-5.500 5.500 5.500" fill="none" stroke="#7a7a7a" stroke-width="1.500"/></svg>
<div class="a" style="left:106px;top:151px;width:520px;height:30px;border:1px solid #d9d9d9;background:#fff"></div>
<svg class="a" style="left:111px;top:157px" width="13" height="16" viewBox="0 0 13 16" preserveAspectRatio="none"><path d="M0.500 0.500h10v15h-10z" fill="#fbe08a" stroke="#efcf6a" stroke-width=".7"/><path d="M10.500 9h2v6.500h-2z" fill="#fbe9a8" stroke="#efd37a" stroke-width=".6"/></svg>
<svg class="a" style="left:131px;top:161px" width="6" height="9"><path d="M1 1l3 3.500L1 8" fill="none" stroke="#6a6a6a" stroke-width="1.300"/></svg>
<svg class="a" style="left:227px;top:161px" width="6" height="9"><path d="M1 1l3 3.500L1 8" fill="none" stroke="#6a6a6a" stroke-width="1.300"/></svg>
<svg class="a" style="left:311px;top:161px" width="6" height="9"><path d="M1 1l3 3.500L1 8" fill="none" stroke="#6a6a6a" stroke-width="1.300"/></svg>
<div class="t" style="left:146.5px;top:158.0px;height:15px;line-height:15px;font-size:11.5px;letter-spacing:0.257px;color:#1e1e1e;">Ten komputer</div>
<div class="t" style="left:242.5px;top:158.0px;height:15px;line-height:15px;font-size:11.5px;letter-spacing:0.355px;color:#1e1e1e;">Dokumenty</div>
<div class="t" style="left:327.0px;top:158.0px;height:15px;line-height:15px;font-size:11.5px;letter-spacing:-0.030px;color:#1e1e1e;">RemoteAccess</div>
<svg class="a" style="left:599px;top:163px" width="10" height="7"><path d="M1 1l4 4 4-4" fill="none" stroke="#555" stroke-width="1.300"/></svg>
<div class="a" style="left:0;top:532px;width:40px;height:24px;background:#d9d9d9"></div>
<div class="a" style="left:0;top:188px;width:40px;height:463px;overflow:hidden">
<svg class="a" style="left:24px;top:20px" width="16" height="16" viewBox="0 0 16 16"><path d="M9 1l2 4.500 5 .5-3.700 3.300L13.300 14 9 11.500 4.700 14l1-4.700L2 6l5-.5z" fill="#2a8be0"/><path d="M0 6h3M0 9h3.500M1 12h3" stroke="#2a8be0" stroke-width="1"/></svg>
<svg class="a" style="left:33px;top:44px" width="12" height="18"><rect x="0" y="0" width="12" height="17" rx="1" fill="#1e88e5"/><rect x="1" y="13" width="10" height="1" fill="#fff"/></svg>
<svg class="a" style="left:32px;top:67px" width="10" height="18"><path d="M10 0v18L0 10h6V0z" fill="#3583c8"/></svg>
<svg class="a" style="left:35px;top:91px" width="10" height="18"><rect x=".5" y=".5" width="12" height="16" fill="#fff" stroke="#8c8c8c"/><path d="M3 4l3-2M3 7h6M3 10h6M3 13h6" stroke="#4a90d0"/></svg>
<svg class="a" style="left:33px;top:117px" width="10" height="14"><rect x=".5" y=".5" width="12" height="12" fill="#fff" stroke="#8c8c8c"/><rect x="3" y="4" width="8" height="6" fill="#3d5a78"/></svg>
<svg class="a" style="left:34px;top:141px" width="6" height="15"><rect x="0.500" y="0.500" width="8" height="14" fill="#fbe7a6" stroke="#f0d27a" stroke-width="1"/></svg>
<svg class="a" style="left:34px;top:164px" width="6" height="15"><rect x="0.500" y="0.500" width="8" height="14" fill="#fbe7a6" stroke="#f0d27a" stroke-width="1"/></svg>
<svg class="a" style="left:34px;top:188px" width="6" height="15"><rect x="0.500" y="0.500" width="8" height="14" fill="#fbe7a6" stroke="#f0d27a" stroke-width="1"/></svg>
<svg class="a" style="left:34px;top:212px" width="6" height="15"><rect x="0.500" y="0.500" width="8" height="14" fill="#fbe7a6" stroke="#f0d27a" stroke-width="1"/></svg>
<svg class="a" style="left:34px;top:236px" width="6" height="15"><rect x="0.500" y="0.500" width="8" height="14" fill="#fbe7a6" stroke="#f0d27a" stroke-width="1"/></svg>
<svg class="a" style="left:34px;top:260px" width="6" height="15"><rect x="0.500" y="0.500" width="8" height="14" fill="#fbe7a6" stroke="#f0d27a" stroke-width="1"/></svg>
<svg class="a" style="left:24px;top:293px" width="16" height="12" viewBox="0 0 16 12"><path d="M4 11a3.500 3.500 0 0 1 .5-7A5 5 0 0 1 14 5.500 3 3 0 0 1 13.500 11z" fill="#1582dc"/></svg>
<svg class="a" style="left:23px;top:324px" width="18" height="15" viewBox="0 0 18 15"><rect x="1" y=".5" width="16" height="10" fill="#3cb4e8" stroke="#2a80b8"/><rect x="2.500" y="2" width="13" height="7" fill="#9fdcf5"/><path d="M6 13.500h6M3 14.500h12" stroke="#8a8a8a"/></svg>
<svg class="a" style="left:35px;top:348px" width="10" height="16"><rect x=".5" y=".5" width="12" height="15" fill="#fff" stroke="#8c8c8c"/><path d="M3 4l3-2M3 7h6M3 10h6M3 13h6" stroke="#4a90d0"/></svg>
<svg class="a" style="left:32px;top:382px" width="10" height="10"><circle cx="6" cy="4" r="3" fill="#1e88e5"/></svg>
<svg class="a" style="left:31px;top:396px" width="10" height="18"><path d="M0 2l10-2v16l-10-2z" fill="#8fd6d6"/><path d="M3 1l7 5v6l-7 3z" fill="#6cc0cf"/></svg>
<svg class="a" style="left:33px;top:421px" width="10" height="14"><rect x=".5" y=".5" width="12" height="12" fill="#fff" stroke="#8c8c8c"/><rect x="3" y="4" width="8" height="6" fill="#3d5a78"/></svg>
<svg class="a" style="left:31px;top:443px" width="10" height="18"><path d="M10 0v16L0 9h6V0z" fill="#3583c8"/></svg>
</div>
<div class="a" style="left:40px;top:188px;width:16px;height:463px;background:#f0f0f0"></div>
<div class="a" style="left:40px;top:205px;width:15px;height:289px;background:#cdcdcd"></div>
<svg class="a" style="left:43px;top:193px" width="10" height="7"><path d="M1 6l4-4 4 4" fill="none" stroke="#444" stroke-width="1.600"/></svg>
<svg class="a" style="left:43px;top:639px" width="10" height="7"><path d="M1 1l4 4 4-4" fill="none" stroke="#444" stroke-width="1.600"/></svg>
<svg class="a" style="left:94px;top:205px" width="58" height="84" viewBox="0 0 58 84"><defs><linearGradient id="bf" x1="0" x2="1"><stop offset="0" stop-color="#eec75a"/><stop offset=".5" stop-color="#f7d878"/><stop offset="1" stop-color="#fbe08c"/></linearGradient></defs><path d="M1 1h49v42l5 3v23H18z" fill="url(#bf)"/><path d="M1 1l17 13v68L1 68z" fill="#fbe49a"/><path d="M50 43l5 3v23h-5z" fill="#fbe49a"/></svg>
<div class="t" style="left:104.5px;top:292.5px;height:15px;line-height:15px;font-size:11.5px;letter-spacing:0.361px;color:#000;">gotowce</div>
<svg class="a" style="left:206px;top:198px" width="74" height="91" viewBox="0 0 74 91"><path d="M10 3h41l19 19v58a8 8 0 0 1-8 8H10a8 8 0 0 1-8-8V11a8 8 0 0 1 8-8z" fill="#f3f3f3" stroke="#d3221c" stroke-width="3.600" stroke-linejoin="round"/><path d="M21 53c8-4 14-14 16-24 1-6-1-10-3-9s-2 6 1 13c4 9 12 13 17 12s4-5-1-5c-9 0-22 5-30 13z" fill="none" stroke="#e0231b" stroke-width="3" stroke-linejoin="round"/><text x="37" y="77" text-anchor="middle" font-family="Liberation Sans" font-weight="bold" font-size="17.500" fill="#2b2b2b" letter-spacing="-.3">PDF</text></svg>
<div class="t" style="left:198.5px;top:292.5px;height:15px;line-height:15px;font-size:11.5px;letter-spacing:-0.044px;color:#000;">etykieta_2022-11-</div>
<div class="t" style="left:198.5px;top:307.0px;height:15px;line-height:15px;font-size:11.5px;letter-spacing:-0.380px;color:#000;">23_14-31-21_1063</div>
<div class="t" style="left:233.5px;top:322.0px;height:15px;line-height:15px;font-size:11.5px;letter-spacing:0.273px;color:#000;">.pdf</div>
<div class="a" style="left:542px;top:194px;width:80px;height:116px;background:#d9d9d9"></div>
<svg class="a" style="left:314px;top:221px;box-shadow:1px 1px 3px rgba(0,0,0,.35)" width="91" height="68" viewBox="0 0 91 68"><defs><filter id="b1"><feGaussianBlur stdDeviation=".7"/></filter><radialGradient id="w1" cx=".62" cy=".45" r=".8"><stop offset="0" stop-color="#bda88e"/><stop offset=".6" stop-color="#ab9378"/><stop offset="1" stop-color="#6f5d4a"/></radialGradient></defs><rect width="91" height="68" fill="url(#w1)"/><g filter="url(#b1)"><path d="M0 20l91-16M0 44l91-18M20 68l71-16" stroke="#9c8468" stroke-width="1" opacity=".6"/><path d="M9 5l24-2 2 38-19 3z" fill="#f1f1f1"/><path d="M9 5l6 5 1 34-5-8z" fill="#d9d9d9"/><path d="M14 8l16-2" stroke="#9aa0a6" stroke-width="2"/><path d="M57 26l12-3 8 6-3 9-11 2-7-6z" fill="#a9aeb3"/><path d="M43 22l12 6M83 20l-9 6M58 46l4-9M88 42l-11-6" stroke="#2b2926" stroke-width="2"/><path d="M50 20l5 7M80 19l-4 7" stroke="#d9d5cc" stroke-width="1.600"/><path d="M29 50l4-6 20 0 5 6-1 11-26 1z" fill="#7e848b"/><rect x="36" y="43" width="13" height="3" fill="#2e2e2e"/><path d="M37 52h3M43 52h3M49 52h3" stroke="#3a3a3a" stroke-width="1.500"/></g></svg>
<svg class="a" style="left:431px;top:221px;box-shadow:1px 1px 3px rgba(0,0,0,.35)" width="91" height="68" viewBox="0 0 91 68"><defs><filter id="b2"><feGaussianBlur stdDeviation=".7"/></filter><radialGradient id="w2" cx=".5" cy=".45" r=".85"><stop offset="0" stop-color="#c1ad94"/><stop offset=".65" stop-color="#b09a80"/><stop offset="1" stop-color="#8b7761"/></radialGradient></defs><rect width="91" height="68" fill="url(#w2)"/><g filter="url(#b2)"><path d="M0 14l91-12M0 36l91-16M0 60l91-18" stroke="#a08a70" stroke-width="1" opacity=".6"/><path d="M20 34l10-3 8 3 2 10-8 5-10-3z" fill="#b6bbc0"/><path d="M4 36l16 2M50 32l-10 6M10 52l10-6M50 52l-9-8" stroke="#34312d" stroke-width="2"/><path d="M28 40l14-4M12 50l3 6M46 50l2 7" stroke="#e6e2da" stroke-width="1.800"/><path d="M56 36l4-5 20 0 5 5-1 12-26 1z" fill="#878d94"/><rect x="63" y="23" width="13" height="4" fill="#1f1f1f"/><path d="M65 27v4M74 27v4" stroke="#1f1f1f" stroke-width="1.500"/><circle cx="62" cy="36" r="1.800" fill="#5a5f66"/><circle cx="80" cy="36" r="1.800" fill="#5a5f66"/><path d="M66 40h2M70 40h3M75 40h2" stroke="#2a2a2a" stroke-width="1.300"/></g></svg>
<svg class="a" style="left:548px;top:221px;box-shadow:1px 1px 3px rgba(0,0,0,.35)" width="91" height="68" viewBox="0 0 91 68"><defs><filter id="b3"><feGaussianBlur stdDeviation=".6"/></filter></defs><rect width="91" height="68" fill="#e9e7e3"/><g filter="url(#b3)"><rect x="0" y="20" width="14" height="18" fill="#7f8a96"/><rect x="14.500" y="10" width="1.600" height="28" fill="#a9a9a9"/><path d="M10.500 12c0-10 4.500-10 4.800-2c.3-8 4.800-8 4.800 2" fill="none" stroke="#c9a51f" stroke-width="1.800"/><rect x="10" y="12.500" width="10" height="2.500" fill="#5a6969"/><rect x="11" y="16.500" width="8.500" height="2.200" fill="#8a7068"/><rect x="11" y="20" width="8.500" height="2.200" fill="#7a8090"/><rect x="19" y="25" width="72" height="10" fill="#8b8d80"/><rect x="36" y="22" width="55" height="4" fill="#b4b8bc"/><rect x="0" y="33" width="44" height="3" fill="#d9dbdf"/><rect x="46" y="30" width="45" height="5" fill="#e1e3e7"/><rect x="0" y="36" width="91" height="12" fill="#a98a74"/><rect x="3" y="37" width="38" height="9" fill="#7b7875"/><rect x="48" y="37" width="18" height="9" fill="#8b857f"/><rect x="40" y="40" width="12" height="8" fill="#5d5a55"/><rect x="0" y="47" width="91" height="5" fill="#bfb7ae"/><rect x="0" y="52" width="91" height="16" fill="#b3b0ac"/></g></svg>
<div class="t" style="left:325.0px;top:292.5px;height:15px;line-height:15px;font-size:11.5px;letter-spacing:0.210px;color:#000;">image1.webp</div>
<div class="t" style="left:442.0px;top:292.5px;height:15px;line-height:15px;font-size:11.5px;letter-spacing:0.260px;color:#000;">image2.webp</div>
<div class="t" style="left:559.0px;top:292.5px;height:15px;line-height:15px;font-size:11.5px;letter-spacing:0.260px;color:#000;">image3.webp</div>
<div class="t" style="left:14.0px;top:655.5px;height:15px;line-height:15px;font-size:11.5px;letter-spacing:0.028px;color:#26323f;">Elementy: 5</div>
<div class="t" style="left:96.5px;top:655.5px;height:15px;line-height:15px;font-size:11.5px;letter-spacing:-0.085px;color:#26323f;">1 zaznaczony element. 11,0 KB</div>
<div class="a" style="left:85px;top:655px;width:1px;height:16px;background:#f4f4f4"></div>
<div class="a" style="left:266px;top:655px;width:1px;height:16px;background:#f4f4f4"></div>
</div>
<div class="a" style="left:966px;top:272px;width:880px;height:676px;background:#fff;box-shadow:0 0 0 1px #767676, 0 3px 16px 3px rgba(0,0,0,.30)"></div>
<div class="a" id="irf" style="left:966px;top:272px;width:880px;height:676px;overflow:hidden;letter-spacing:0">
<svg class="a" style="left:8px;top:5px" width="17" height="17" viewBox="0 0 17 17"><rect x="1" y="1" width="15" height="15" fill="#b4b4b4" opacity=".75"/><path d="M8.500 8L6.500 1l3 .5.800 3.500L13 2l1.800 1.500-2.500 3.500 4.200-.3.200 2.600-4.200.7 2.300 3.300-2 1.500-2.800-3.200-.8 4.200-2.700-.4.600-4.300-3.800 2.400L2 11.500l3.800-2.500L1.500 6.800l1-2.300 4.300 1.300z" fill="#b01414"/><circle cx="8.500" cy="8" r="3.400" fill="#a00c0c"/><circle cx="13.500" cy="12" r="1.600" fill="#b01414"/></svg>
<div class="t" style="left:29.5px;top:7.2px;height:16px;line-height:16px;font-size:12px;letter-spacing:-0.061px;color:#000;">image3.webp - IrfanView</div>
<svg class="a" style="left:749px;top:2px" width="130" height="26"><path d="M12 12.500h10" stroke="#000"/><path d="M57.500 7.500h10v10h-10z" fill="none" stroke="#000"/><path d="M103 7l10 10M113 7l-10 10" stroke="#000" stroke-width="1.100"/></svg>
<div class="t" style="left:7.5px;top:32.2px;height:16px;line-height:16px;font-size:12px;letter-spacing:-0.612px;color:#000;">File</div>
<div class="t" style="left:39.5px;top:32.2px;height:16px;line-height:16px;font-size:12px;letter-spacing:-0.393px;color:#000;">Edit</div>
<div class="t" style="left:73.5px;top:32.2px;height:16px;line-height:16px;font-size:12px;letter-spacing:-0.213px;color:#000;">Image</div>
<div class="t" style="left:120.5px;top:32.2px;height:16px;line-height:16px;font-size:12px;letter-spacing:0.024px;color:#000;">Options</div>
<div class="t" style="left:176.5px;top:32.2px;height:16px;line-height:16px;font-size:12px;letter-spacing:-0.431px;color:#000;">View</div>
<div class="t" style="left:215.5px;top:32.2px;height:16px;line-height:16px;font-size:12px;letter-spacing:-0.060px;color:#000;">Help</div>
<div class="a" style="left:0;top:50px;width:880px;height:38px;background:#f0f0f0;border-top:1px solid #a0a0a0;box-shadow:inset 0 1px 0 #fff, inset 0 -2px 0 #fff"></div>
<svg class="a" style="left:0px;top:52px" width="640" height="32" viewBox="0 0 640 32">
<defs>
<linearGradient id="tg1" x1="0" y1="0" x2="0" y2="1"><stop offset="0" stop-color="#fbe87a"/><stop offset="1" stop-color="#e9b41d"/></linearGradient>
<linearGradient id="tg2" x1="0" y1="0" x2="0" y2="1"><stop offset="0" stop-color="#6aa3ea"/><stop offset="1" stop-color="#2458b8"/></linearGradient>
<radialGradient id="tg3" cx=".4" cy=".35" r=".7"><stop offset="0" stop-color="#8fbdf2"/><stop offset="1" stop-color="#2a62c2"/></radialGradient>
<radialGradient id="tg4" cx=".45" cy=".4" r=".6"><stop offset="0" stop-color="#e9f2fd"/><stop offset="1" stop-color="#a9c8f0"/></radialGradient>
</defs>
<!-- open -->
<path d="M4.500 9.500q0-1.500 1.500-1.500h5l2 2h8q1.500 0 1.500 1.500v4H4.500z" fill="#f7e26a" stroke="#3d2c00" stroke-width=".9"/><path d="M3.500 25.500L8 14.500h19.500L22.500 25.500z" fill="url(#tg1)" stroke="#3d2c00" stroke-width=".9"/><path d="M4.500 15.500v9" stroke="#3d2c00" stroke-width=".9"/><path d="M17 6q5-3 8 1.500" fill="none" stroke="#111" stroke-width="1.400"/><path d="M22.500 5.500l4 3.500-5 .5z" fill="#111"/>
<!-- film -->
<defs><linearGradient id="tg6" x1="0" y1="0" x2="0" y2="1"><stop offset="0" stop-color="#7fbdea"/><stop offset=".55" stop-color="#bfe0f0"/><stop offset=".6" stop-color="#f2c56a"/><stop offset="1" stop-color="#e0952a"/></linearGradient></defs>
<rect x="34.500" y="5.500" width="23" height="20" fill="#24367f"/><rect x="34.500" y="9" width="23" height="13" fill="#f0c880"/><rect x="38" y="9" width="16" height="13" fill="url(#tg6)"/><path d="M38 22l5-5 4 2 7-4v7z" fill="#e0952a"/><circle cx="50.500" cy="12.500" r="1.800" fill="#fff6c8"/><rect x="37" y="9" width="1.200" height="13" fill="#dfe6ff"/><rect x="53.800" y="9" width="1.200" height="13" fill="#dfe6ff"/><path d="M35.500 7.300h21M35.500 23.700h21" stroke="#dfe6ff" stroke-width="1.300" stroke-dasharray="1.200 1.300"/>
<!-- save -->
<path d="M66.500 4.500h20l1.500 1.500v20h-21.500z" fill="url(#tg2)" stroke="#17367a" stroke-width=".9"/><rect x="70" y="4.500" width="14" height="11.500" fill="#fff"/><rect x="70" y="4.500" width="14" height="2.500" fill="#8c1c1c"/><path d="M70 9.300h14M70 12h14M70 14.800h14" stroke="#c63a4a" stroke-width="1.300"/><rect x="72" y="20" width="9" height="6" fill="#fff"/><rect x="73" y="21" width="2.500" height="5" fill="#111"/>
<!-- print -->
<path d="M101.500 4.500h9l3.500 3.500v6h-12.500z" fill="#fff" stroke="#8a8a8a" stroke-width=".9"/><path d="M110.500 4.500v3.500h3.500" fill="#e4e4e4" stroke="#8a8a8a" stroke-width=".7"/><rect x="97.500" y="12.500" width="22" height="10.500" rx="2.500" fill="#7aa7e6" stroke="#1f3f8a" stroke-width=".9"/><rect x="101" y="15" width="14" height="4" fill="#4f84d4"/><rect x="113.500" y="15.500" width="2.500" height="2.500" fill="#1f3f8a"/><path d="M100.500 20.500h16l1.500 5h-19z" fill="#fff" stroke="#8a8a8a" stroke-width=".8"/><rect x="102" y="21.500" width="13" height="2" fill="#e4a91d"/>
<!-- delete -->
<path d="M131 7q7 8 17 17M147.500 6.500q-10 7-16 19" fill="none" stroke="#cf3e38" stroke-width="3" stroke-linecap="round"/>
<path d="M157.500 2v25" stroke="#8a8a8a" stroke-width="1"/><path d="M158.500 2v25" stroke="#fff" stroke-width="1"/>
<!-- scissors gray -->
<path d="M172 5l9 14M185 5l-9 14" stroke="#a8a8a8" stroke-width="2"/><circle cx="173.500" cy="22" r="2.800" fill="none" stroke="#a8a8a8" stroke-width="1.600"/><circle cx="183.500" cy="22" r="2.800" fill="none" stroke="#a8a8a8" stroke-width="1.600"/>
<!-- copy -->
<path d="M199.500 4.500h7l3 3v10h-10z" fill="#fff" stroke="#7a7a7a" stroke-width=".9"/><path d="M201.500 9h5M201.500 11.500h6M201.500 14h6" stroke="#9a9a9a" stroke-width=".9"/><path d="M207.500 10.500h8l3 3v12h-11z" fill="#e2eefc" stroke="#3d6ab0" stroke-width=".9"/><path d="M210 16h6M210 18.500h6M210 21h6" stroke="#4a80c8" stroke-width="1.100"/>
<!-- paste -->
<rect x="231" y="6.500" width="17" height="18" rx="1.500" fill="#e8c84a" stroke="#8a6a10" stroke-width=".9"/><rect x="235" y="4" width="9" height="5" rx="1" fill="#5a5a5a"/><rect x="236.500" y="9.500" width="6" height="2" fill="#fff"/><path d="M239.500 14.500h10l2 2v9h-12z" fill="#e2eefc" stroke="#3d6ab0" stroke-width=".9"/><path d="M242 19h7M242 22h7" stroke="#4a80c8" stroke-width="1.100"/>
<!-- undo -->
<path d="M266 10q9-7 12 1t-6 13" fill="none" stroke="#a6a6a6" stroke-width="3.400"/><path d="M262 8l8-1.500-1 8.500z" fill="#a6a6a6"/>
<path d="M289.500 2v25" stroke="#8a8a8a" stroke-width="1"/><path d="M290.500 2v25" stroke="#fff" stroke-width="1"/>
<!-- info -->
<circle cx="309.500" cy="15" r="10.500" fill="url(#tg3)" stroke="#1f4ea8" stroke-width=".8"/><rect x="308" y="12.500" width="3.200" height="9" rx=".8" fill="#fff"/><circle cx="309.600" cy="9" r="1.900" fill="#fff"/>
<!-- zoom in -->
<circle cx="401" cy="13" r="8" fill="url(#tg4)" stroke="#2a5ab4" stroke-width="1.700"/><path d="M396.500 13h9M401 8.500v9" stroke="#1a2a7a" stroke-width="2"/><path d="M407 19.500l6 6" stroke="#b8862a" stroke-width="3.400" stroke-linecap="round"/>
<!-- zoom out -->
<circle cx="432" cy="13" r="8" fill="url(#tg4)" stroke="#2a5ab4" stroke-width="1.700"/><path d="M427.500 13h9" stroke="#1a2a7a" stroke-width="2"/><path d="M438 19.500l6 6" stroke="#b8862a" stroke-width="3.400" stroke-linecap="round"/>
<!-- arrows -->
<path d="M454.500 15.500l9-8.500v5h11v7h-11v5z" fill="url(#tg2)" stroke="#1f4ea8" stroke-width=".8"/>
<path d="M507 15.500l-9-8.500v5h-11v7h11v5z" fill="url(#tg2)" stroke="#1f4ea8" stroke-width=".8"/>
<!-- page up/down -->
<g fill="#e6e6e6" stroke="#a4a4a4" stroke-width=".9"><rect x="517.500" y="4.500" width="13" height="16" rx="1.500"/><rect x="519.500" y="6.500" width="13" height="16" rx="1.500"/><rect x="521.500" y="8.500" width="13" height="16" rx="1.500"/><rect x="548.500" y="4.500" width="13" height="16" rx="1.500"/><rect x="550.500" y="6.500" width="13" height="16" rx="1.500"/><rect x="552.500" y="8.500" width="13" height="16" rx="1.500"/></g>
<path d="M528 12l-4.500 5h3v5h3v-5h3z" fill="#9a9a9a"/><path d="M559 22l-4.500-5h3v-5h3v5h3z" fill="#9a9a9a"/>
<!-- tools -->
<g transform="translate(0,1)">
<circle cx="595.800" cy="7.600" r="3.600" fill="#cfe3f7" stroke="#2f4674" stroke-width="1"/><circle cx="582.300" cy="21.400" r="3.600" fill="#cfe3f7" stroke="#2f4674" stroke-width="1"/>
<path d="M594 9.500L584 19.500" stroke="#2f4674" stroke-width="4.400"/><path d="M595 8.500L583 20.500" stroke="#cfe3f7" stroke-width="2.500"/>
<path d="M596.300 7.200L600.500 3" stroke="#f0f0f0" stroke-width="2.700"/><path d="M581.800 21.900L577.600 26.100" stroke="#f0f0f0" stroke-width="2.700"/>
<path d="M578 5l2.300-1.700 4.200 4.500-.8 2-2.200-.2-3.700-3.300z" fill="#a9c4f2" stroke="#2f3f8a" stroke-width=".8"/><path d="M583.500 9L591 16.500" stroke="#3b4fa5" stroke-width="1.700"/>
<path d="M592.200 17.700l6.300 6.300" stroke="#6b4a10" stroke-width="5.600" stroke-linecap="round"/><path d="M592.200 17.700l6.300 6.300" stroke="#d4aa2f" stroke-width="3.800" stroke-linecap="round"/>
</g>
<!-- mascot -->
<defs><radialGradient id="tg5" cx=".45" cy=".4" r=".65"><stop offset="0" stop-color="#ee3434"/><stop offset="1" stop-color="#b41212"/></radialGradient></defs>
<path d="M619 14L611.500 9" stroke="#b41a1a" stroke-width="3.200" stroke-linecap="round"/><path d="M621 12l-1-5" stroke="#c42020" stroke-width="3.600" stroke-linecap="round"/>
<path d="M627 15l1.500-7" stroke="#d62a2a" stroke-width="4.600" stroke-linecap="round"/><path d="M620 19.500l-8.500 1.300" stroke="#cc1c1c" stroke-width="4.800" stroke-linecap="round"/>
<ellipse cx="624" cy="19.500" rx="7" ry="6.700" fill="url(#tg5)"/>
<path d="M614.800 13.200L621 10.800" stroke="#111" stroke-width="3" stroke-linecap="round"/><circle cx="616.200" cy="13" r=".8" fill="#fff"/><circle cx="619.800" cy="11.500" r=".8" fill="#fff"/>
</svg>
<div class="a" style="left:329px;top:54px;width:58px;height:27px;background:#fff;border:1px solid #7a7a7a"></div>
<div class="t" style="left:333.5px;top:57.5px;height:16px;line-height:16px;font-size:12.5px;letter-spacing:-0.570px;color:#000;">100.0</div>
<svg class="a" style="left:373px;top:64px" width="10" height="7"><path d="M1 1l4 4 4-4" fill="none" stroke="#444" stroke-width="1.200"/></svg>
<div class="a" style="left:1px;top:88px;width:877px;height:563px;background:#000">
<svg class="a" style="left:89px;top:19px" width="700" height="525" viewBox="0 0 700 525"><defs>
<filter id="pb" x="-5%" y="-5%" width="110%" height="110%"><feGaussianBlur stdDeviation="3.200"/></filter>
<filter id="pb2" x="-5%" y="-5%" width="110%" height="110%"><feGaussianBlur stdDeviation="1.600"/></filter>
<filter id="pb0"><feGaussianBlur stdDeviation=".5"/></filter>
<linearGradient id="sky" x1="0" y1="0" x2="0" y2="1"><stop offset="0" stop-color="#e7e6e2"/><stop offset="1" stop-color="#efedea"/></linearGradient>
<linearGradient id="road" x1="0" y1="0" x2="0" y2="1"><stop offset="0" stop-color="#b3b0ac"/><stop offset=".35" stop-color="#bdbab6"/><stop offset=".7" stop-color="#bab7b3"/><stop offset="1" stop-color="#c6c4c0"/></linearGradient>
<linearGradient id="dbody" x1="0" y1="0" x2="0" y2="1"><stop offset="0" stop-color="#d4d3cf"/><stop offset="1" stop-color="#a9a8a4"/></linearGradient>
<linearGradient id="darm" x1="0" y1="0" x2="0" y2="1"><stop offset="0" stop-color="#c8c9c7"/><stop offset="1" stop-color="#adaeac"/></linearGradient>
<clipPath id="pc"><rect width="700" height="525"/></clipPath>
</defs><g clip-path="url(#pc)"><rect width="700" height="525" fill="url(#sky)"/><g filter="url(#pb)"><path d="M-10 160l40-4 20 8 50 18 6 4v80H-10z" fill="#8f97a3"/><path d="M0 160h40v12H0z" fill="#767d88"/><path d="M10 200h80v6H10zM10 222h80v6H10z" fill="#a4abb6"/><rect x="109" y="100" width="11" height="165" fill="#c9c9c9"/><path d="M88 80c2-52 22-66 30-14c8-52 28-38 30 14" fill="none" stroke="#c7a722" stroke-width="9"/><rect x="80" y="82" width="70" height="21" fill="#5d6c6c"/><path d="M83 117h65l-5 19H88z" fill="#8b6c63"/><rect x="85" y="147" width="61" height="17" fill="#7b8191"/><path d="M149 197h99v18h357v38H149z" fill="#8b8d80"/><path d="M149 236h456v17H149z" fill="#85877b"/><path d="M274 193l331-16v38H274z" fill="#a9adb0"/><path d="M274 193l331-16v9l-331 15z" fill="#c6cacd"/><path d="M300 200h280v6H300z" fill="#8f9396" opacity=".7"/><rect x="529" y="176" width="26" height="26" fill="#6e7378"/><path d="M590 178h120v24H590z" fill="#a9b7c6"/><rect x="605" y="201" width="100" height="32" fill="#555957"/><rect x="610" y="160" width="7" height="22" fill="#8c8c88"/><rect x="655" y="162" width="16" height="22" fill="#b8b0a0"/><rect x="690" y="156" width="8" height="30" fill="#a0a4a8"/><rect x="150" y="208" width="21" height="38" fill="#c9ab33"/><rect x="276" y="132" width="3" height="60" fill="#dad9d6"/><rect x="-10" y="262" width="720" height="130" fill="#b68f74"/><rect x="513" y="262" width="200" height="130" fill="#b07a59"/><rect x="672" y="262" width="40" height="130" fill="#9a6f55"/><rect x="-10" y="282" width="56" height="74" fill="#5d6166"/><rect x="46" y="282" width="20" height="80" fill="#b58c6a"/><rect x="70" y="288" width="38" height="78" fill="#7f7b77"/><rect x="118" y="288" width="20" height="78" fill="#7f7b77"/><rect x="146" y="288" width="36" height="78" fill="#7f7b77"/><rect x="190" y="288" width="22" height="78" fill="#7f7b77"/><rect x="222" y="288" width="44" height="78" fill="#7f7b77"/><rect x="276" y="288" width="56" height="78" fill="#7f7b77"/><rect x="60" y="340" width="40" height="18" fill="#c9c9c9"/><rect x="368" y="284" width="146" height="82" fill="#8b8781"/><rect x="372" y="288" width="60" height="70" fill="#807a74"/><rect x="452" y="288" width="58" height="70" fill="#86807a"/><rect x="436" y="282" width="12" height="88" fill="#a98466"/><rect x="336" y="252" width="22" height="60" fill="#6a6e76"/><rect x="340" y="300" width="12" height="70" fill="#8a8580"/><path d="M-10 258h350v24H-10z" fill="#d9dbdf"/><path d="M-10 274h350v8H-10z" fill="#b4b8be"/><path d="M363 232l45-2h300v36H363z" fill="#e5e7eb"/><path d="M363 252h345v14H363z" fill="#b9bdc4"/><rect x="651" y="-5" width="9" height="270" fill="#b5b5b3"/><rect x="651" y="265" width="10" height="160" fill="#6b6966"/><ellipse cx="653" cy="275" rx="13" ry="17" fill="#e9dcd8" stroke="#c9877f" stroke-width="3"/><rect x="517" y="280" width="12" height="16" fill="#c4c8cc"/><rect x="-10" y="372" width="720" height="56" fill="#c4bfb9"/><rect x="-10" y="372" width="720" height="12" fill="#b3a79d"/><rect x="60" y="376" width="4" height="22" fill="#8a8078"/><rect x="118" y="376" width="4" height="22" fill="#8a8078"/><rect x="580" y="390" width="6" height="28" fill="#8a7a70"/><rect x="-10" y="412" width="720" height="18" fill="#c5b8aa"/><rect x="-10" y="428" width="720" height="110" fill="url(#road)"/><path d="M450 434l260 4v22l-120-6z" fill="#8d8c7c"/><path d="M-10 462h720v12H-10z" fill="#adaaa6"/></g><g filter="url(#pb2)"><ellipse cx="205" cy="309" rx="92" ry="4" fill="#55524e" opacity=".28"/><ellipse cx="240" cy="306" rx="50" ry="3" fill="#d8d8d6" opacity=".5"/><ellipse cx="560" cy="308" rx="75" ry="4" fill="#3a3835" opacity=".42"/><ellipse cx="480" cy="307" rx="45" ry="3" fill="#d0d0ce" opacity=".4"/><path d="M68 371l100-14 4 10-100 8z" fill="#c8c8c6" opacity=".9"/><path d="M500 357l98 10-2 6-98-6z" fill="#c4c4c2" opacity=".85"/></g><g filter="url(#pb0)"><rect x="161" y="316" width="38" height="16" rx="4" fill="#a7a7a5"/><rect x="161" y="316" width="38" height="5" rx="2" fill="#c9c9c7"/><rect x="511" y="316" width="38" height="16" rx="4" fill="#a7a7a5"/><rect x="511" y="316" width="38" height="5" rx="2" fill="#c9c9c7"/><rect x="172" y="306" width="16" height="10" fill="#4a4a48"/><rect x="522" y="306" width="16" height="10" fill="#4a4a48"/><path d="M153 338q0-8 10-8h128v24H178v60q0 8-8 8h-9q-8 0-8-8z" fill="url(#darm)"/><path d="M417 330h134q9 0 9 9v72q0 7-7 7h-9q-7 0-7-7v-57H417z" fill="url(#darm)"/><path d="M153 338q0-8 10-8h128v4H163q-6 0-6 6v70h-4z" fill="#dcdcd9"/><path d="M417 330h134q9 0 9 9v72h-4v-70q0-7-7-7H417z" fill="#d6d6d3"/><rect x="205" y="335" width="77" height="16" rx="3" fill="#26241f"/><rect x="205" y="335" width="8" height="16" fill="#e1b92d"/><circle cx="273" cy="343" r="5" fill="#e1b92d"/><path d="M220 341h42M220 346h30" stroke="#6d6a60" stroke-width="1.500"/><text x="453" y="346" font-family="Liberation Sans" font-weight="bold" font-size="10" fill="#8d8d8a" letter-spacing=".3">MINI 2</text><path d="M178 380l92-14q14-2 22 8l4 22-96 6-22 0z" fill="#aeaeac"/><path d="M178 380l92-14q14-2 22 8l-100 14z" fill="#c8c8c6"/><path d="M209 383q0-4 5-5l45-4q4 0 4 4v14q0 4-4 4l-45 2q-5 0-5-4z" fill="#26241f"/><rect x="257" y="375" width="6" height="18" fill="#e1b92d"/><circle cx="217" cy="389" r="5" fill="none" stroke="#e1b92d" stroke-width="1.500"/><path d="M396 366l20 4 50 8 40-2v18l-50 6-58-4z" fill="#b1b1af"/><path d="M396 366l20 4 50 8 40-2v5l-40 3-70-8z" fill="#cacac8"/><rect x="472" y="356" width="36" height="22" rx="4" fill="#a3a3a1"/><rect x="478" y="350" width="22" height="8" fill="#bdbdbb"/><rect x="172" y="352" width="20" height="26" rx="4" fill="#a5a5a3"/><path d="M288 330q2-8 14-9l100 0q12 1 15 9l-2 24-18 14-8 40-74 2-8-42-17-14z" fill="url(#dbody)"/><path d="M288 330q2-8 14-9l100 0q12 1 15 9l-3 10-20 4-90 0-14-6z" fill="#dddcd8"/><path d="M300 332l18 0-4 14-10-2zM405 332l-18 0 4 14 10-2z" fill="#3d3b38"/><rect x="338" y="338" width="28" height="3" rx="1.500" fill="#4a4844"/><path d="M313 358q2-6 10-6h60q8 0 10 6l-4 50-72 2z" fill="#3a3835"/><path d="M313 398l10-2v14l-8 2zM393 398l-10-2v14l8 2z" fill="#a8a49c"/><rect x="334" y="400" width="40" height="12" fill="#b4b0a8"/><rect x="324" y="362" width="56" height="36" rx="8" fill="#23211f"/><rect x="340" y="370" width="34" height="24" rx="3" fill="#151413"/><circle cx="361" cy="382" r="7" fill="#2e2c2a" stroke="#4a4844" stroke-width="1.500"/><circle cx="361" cy="382" r="2.500" fill="#0a0a0a"/></g></g></svg>
</div>
<div class="a" style="left:0;top:651px;width:880px;height:26px;background:#f0f0f0;border-top:2px solid #fff"></div>
<div class="t" style="left:2.5px;top:658.3px;height:15px;line-height:15px;font-size:11.5px;letter-spacing:-0.391px;color:#000;">700 x 525 x 24 BPP</div>
<div class="t" style="left:111.5px;top:658.3px;height:15px;line-height:15px;font-size:11.5px;letter-spacing:0.757px;color:#000;">4/4</div>
<div class="t" style="left:140.5px;top:658.3px;height:15px;line-height:15px;font-size:11.5px;letter-spacing:-0.527px;color:#000;">100 %</div>
<div class="t" style="left:182.5px;top:658.3px;height:15px;line-height:15px;font-size:11.5px;letter-spacing:-0.169px;color:#000;">11.04 KB / 1.05 MB</div>
<div class="t" style="left:291.5px;top:658.3px;height:15px;line-height:15px;font-size:11.5px;letter-spacing:-0.295px;color:#000;">18.02.2023 / 20:26:42</div>
<div class="a" style="left:106px;top:655px;width:1px;height:20px;background:#d7d7d7;box-shadow:1px 0 0 #fff"></div>
<div class="a" style="left:134px;top:655px;width:1px;height:20px;background:#d7d7d7;box-shadow:1px 0 0 #fff"></div>
<div class="a" style="left:176px;top:655px;width:1px;height:20px;background:#d7d7d7;box-shadow:1px 0 0 #fff"></div>
<div class="a" style="left:285px;top:655px;width:1px;height:20px;background:#d7d7d7;box-shadow:1px 0 0 #fff"></div>
<div class="a" style="left:404px;top:655px;width:1px;height:20px;background:#d7d7d7;box-shadow:1px 0 0 #fff"></div>
<svg class="a" style="left:868px;top:664px" width="10" height="10"><path d="M7 1h2v2H7zM4 4h2v2H4zM7 4h2v2H7zM1 7h2v2H1zM4 7h2v2H4zM7 7h2v2H7z" fill="#b8b8b8"/></svg>
</div>
</body></html>
